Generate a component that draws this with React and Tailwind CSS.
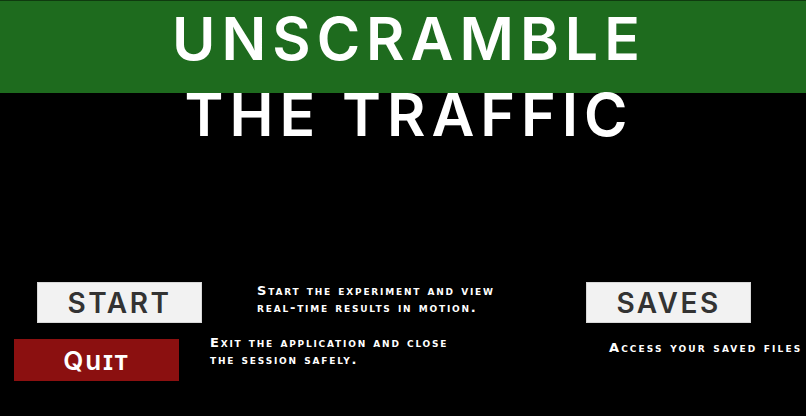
export default function App() {
  const desc = "text-[13px] leading-[17px] text-white font-bold [font-variant:small-caps] tracking-[1.8px] font-['DejaVu_Sans',sans-serif]";
  const light = "bg-[#f2f2f2] border border-[#d8d8d8] flex items-center justify-center text-[#333] text-[28px] font-semibold tracking-[2.5px] font-['Inter',sans-serif]";
  return (
    <div className="w-[806px] h-[416px] bg-black overflow-hidden">
      <div className="border-t border-[#0f3a0f] bg-[linear-gradient(to_bottom,#1e6b1e_92px,#000_92px)]">
        <h1 className="pl-[12px] text-center text-white text-[59px] leading-[76px] font-semibold tracking-[6px] font-['Inter',sans-serif]">
          <div>UNSCRAMBLE</div>
          <div>THE TRAFFIC</div>
        </h1>
      </div>
      <div className="mt-[129px]">
        <div className="flex items-start">
          <div className={"ml-[37px] w-[165px] h-[41px] " + light}>START</div>
          <div className={"ml-[55px] w-[329px] " + desc}>
            <div>Start the experiment and view</div>
            <div>real-time results in motion.</div>
          </div>
          <div className={"w-[165px] h-[41px] " + light}>SAVES</div>
        </div>
        <div className="flex items-start mt-[11px]">
          <div className="ml-[14px] mt-[5px] w-[165px] h-[42px] bg-[#8b1010] flex items-center justify-center text-white text-[26px] font-semibold tracking-[2px] [font-variant:small-caps] font-['Inter',sans-serif]">
            Quit
          </div>
          <div className={"ml-[31px] w-[399px] " + desc}>
            <div>Exit the application and close</div>
            <div>the session safely.</div>
          </div>
          <div className={"mt-[5px] whitespace-nowrap tracking-[2.1px] " + desc}>Access your saved files</div>
        </div>
      </div>
    </div>
  );
}
